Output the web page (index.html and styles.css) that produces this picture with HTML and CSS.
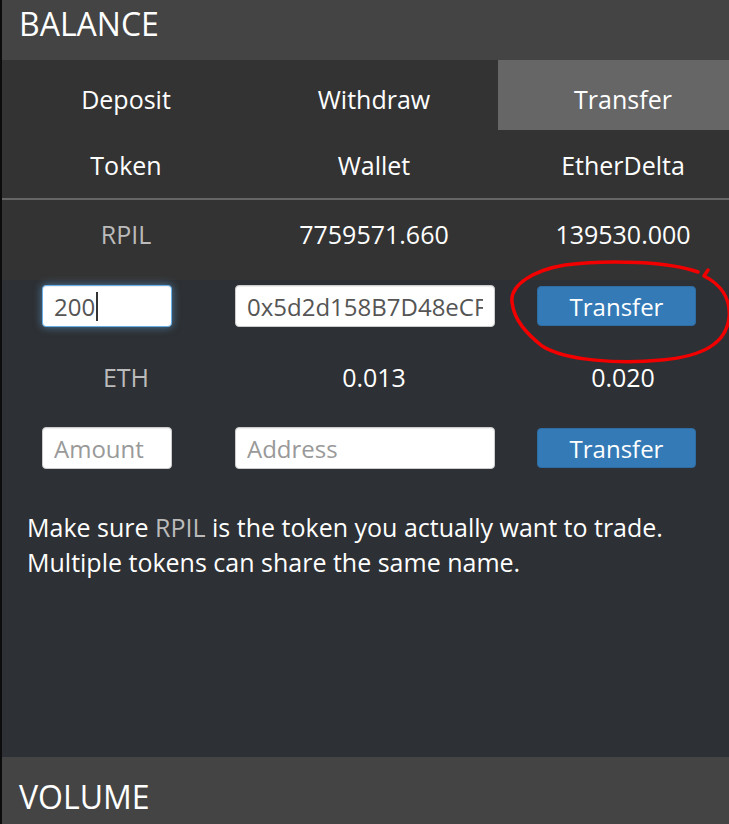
FILE: index.html
```html
<!DOCTYPE html>
<html lang="en">
<head>
<meta charset="utf-8">
<title>Balance</title>
<link rel="stylesheet" href="styles.css">
</head>
<body>
<div class="page">
  <div class="panel">
    <div class="panel-title">BALANCE</div>
    <div class="top">
      <div class="tabs">
        <div class="tab">Deposit</div>
        <div class="tab">Withdraw</div>
        <div class="tab active">Transfer</div>
      </div>
      <div class="row head">
        <div>Token</div>
        <div>Wallet</div>
        <div>EtherDelta</div>
      </div>
      <div class="row vals">
        <div class="tok">RPIL</div>
        <div>7759571.660</div>
        <div>139530.000</div>
      </div>
    </div>
    <div class="body">
      <div class="form first">
        <div class="field">
          <input class="amount focus" type="text" value="200">
          <span class="caret"></span>
        </div>
        <input class="address" type="text" value="0x5d2d158B7D48eCF8fa8f0b1e5b2d0">
        <button class="btn">Transfer</button>
      </div>
      <div class="row vals eth">
        <div class="tok">ETH</div>
        <div>0.013</div>
        <div>0.020</div>
      </div>
      <div class="form">
        <div class="field">
          <input class="amount" type="text" placeholder="Amount">
        </div>
        <input class="address" type="text" placeholder="Address">
        <button class="btn">Transfer</button>
      </div>
      <p class="note">Make sure <span class="tok">RPIL</span> is the token you actually want to trade.<br>Multiple tokens can share the same name.</p>
    </div>
    <div class="panel-title vol">VOLUME</div>
  </div>
  <svg class="annot" width="729" height="824" viewBox="0 0 729 824">
    <path d="M698 272 C670 262 610 259 565 265 C535 270 510 284 512 302 C514 320 526 333 542 346 C566 361 620 364 662 360 C704 356 726 343 729 318 C731 298 720 284 704 276 L708 270" fill="none" stroke="#f20000" stroke-width="3.5" stroke-linecap="round" stroke-linejoin="round"/>
  </svg>
</div>
</body>
</html>
```

FILE: styles.css
```css
html, body {
  margin: 0;
  padding: 0;
  overflow: hidden;
  background: #0c0c0c;
}

.page {
  position: relative;
  width: 729px;
  height: 824px;
  overflow: hidden;
  font-family: "Open Sans", "DejaVu Sans", sans-serif;
  color: #fff;
}

.panel {
  margin-left: 2px;
  width: 746px;
}

.panel-title {
  height: 60px;
  background: #444;
  font-size: 32px;
  line-height: 48px;
  padding-left: 17px;
  box-sizing: border-box;
}

.panel-title.vol {
  height: 67px;
  line-height: 80px;
}

.top {
  background: #333;
}

.tabs {
  display: grid;
  grid-template-columns: 248px 248px 250px;
}

.tab {
  height: 70px;
  box-sizing: border-box;
  padding-top: 24px;
  font-size: 25px;
  line-height: 30px;
  text-align: center;
}

.tab.active {
  background: #666;
}

.row {
  display: grid;
  grid-template-columns: 248px 248px 250px;
  font-size: 25px;
  line-height: 30px;
  text-align: center;
}

.row.head {
  padding: 20px 0 18px;
  border-bottom: 2px solid #666;
}

.row.vals {
  padding: 19px 0 31px;
}

.row.eth {
  padding: 22px 0 35px;
}

.tok {
  color: #bbb;
}

.body {
  background: #2d3034;
  height: 477px;
  box-sizing: border-box;
  padding-top: 5px;
}

.form {
  display: flex;
  align-items: center;
  padding-left: 40px;
  height: 42px;
}

.form.first {
  margin-bottom: 13px;
}

.field {
  position: relative;
  display: flex;
}

input {
  box-sizing: border-box;
  height: 42px;
  border: 1px solid #ccc;
  border-radius: 4px;
  background: #fff;
  font-family: "Open Sans", "DejaVu Sans", sans-serif;
  font-size: 24px;
  color: #555;
  padding: 0 11px;
  outline: none;
  box-shadow: inset 0 1px 1px rgba(0, 0, 0, 0.075);
}

input::placeholder {
  color: #999;
}

.amount {
  width: 130px;
}

.amount.focus {
  border-color: #66afe9;
  box-shadow: inset 0 1px 1px rgba(0, 0, 0, 0.075), 0 0 8px rgba(102, 175, 233, 0.6);
}

.caret {
  position: absolute;
  left: 54px;
  top: 7px;
  width: 1.5px;
  height: 29px;
  background: #333;
}

.address {
  width: 260px;
  margin-left: 63px;
}

.btn {
  box-sizing: border-box;
  width: 159px;
  height: 40px;
  margin-left: 42px;
  background: #337ab7;
  border: 1px solid #2e6da4;
  border-radius: 4px;
  color: #fff;
  font-family: "Open Sans", "DejaVu Sans", sans-serif;
  font-size: 24px;
  padding: 0;
}

.note {
  margin: 41px 0 0;
  padding-left: 25px;
  font-size: 25px;
  line-height: 35px;
}

.annot {
  position: absolute;
  left: 0;
  top: 0;
  pointer-events: none;
}
```
